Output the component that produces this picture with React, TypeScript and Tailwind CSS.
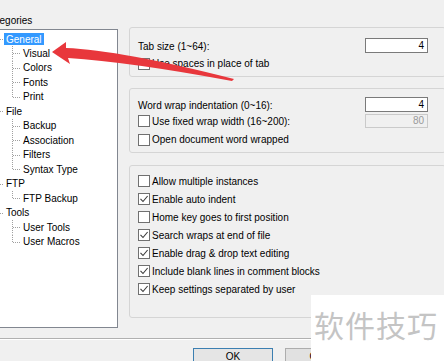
import React from 'react';

type Node = { label: string; level: 0 | 1; selected?: boolean; last?: boolean };

const tree: Node[] = [
  { label: 'General', level: 0, selected: true },
  { label: 'Visual', level: 1 },
  { label: 'Colors', level: 1 },
  { label: 'Fonts', level: 1 },
  { label: 'Print', level: 1, last: true },
  { label: 'File', level: 0 },
  { label: 'Backup', level: 1 },
  { label: 'Association', level: 1 },
  { label: 'Filters', level: 1 },
  { label: 'Syntax Type', level: 1, last: true },
  { label: 'FTP', level: 0 },
  { label: 'FTP Backup', level: 1, last: true },
  { label: 'Tools', level: 0 },
  { label: 'User Tools', level: 1 },
  { label: 'User Macros', level: 1, last: true },
];

const options = [
  { label: 'Allow multiple instances', checked: false },
  { label: 'Enable auto indent', checked: true },
  { label: 'Home key goes to first position', checked: false },
  { label: 'Search wraps at end of file', checked: true },
  { label: 'Enable drag & drop text editing', checked: true },
  { label: 'Include blank lines in comment blocks', checked: true },
  { label: 'Keep settings separated by user', checked: true },
];

const Checkbox = ({ checked }: { checked?: boolean }) => (
  <div className="w-[12px] h-[12px] border border-[#707070] bg-white flex-shrink-0 flex items-center justify-center">
    {checked && (
      <svg width="10" height="10" viewBox="0 0 10 10">
        <path d="M1.5 4.8 L4 7.5 L8.6 2" fill="none" stroke="#3a3a3a" strokeWidth="1.1" />
      </svg>
    )}
  </div>
);

const CheckRow = ({ label, checked, className = '' }: { label: string; checked?: boolean; className?: string }) => (
  <div className={`flex items-center ${className}`}>
    <Checkbox checked={checked} />
    <span className="ml-[2px] leading-[12px] pt-[1px]">{label}</span>
  </div>
);

const TreeRow = ({ node }: { node: Node }) => (
  <div className="flex h-[14.5px] items-center">
    {node.level === 0 ? (
      <svg width="4" height="14.5" className="flex-shrink-0">
        <line x1="0" y1="7.5" x2="4" y2="7.5" stroke="#a0a0a0" strokeDasharray="1 1" />
      </svg>
    ) : (
      <svg width="23" height="14.5" className="flex-shrink-0">
        <line x1="12.5" y1="0" x2="12.5" y2={node.last ? 7.5 : 14.5} stroke="#a0a0a0" strokeDasharray="1 1" />
        <line x1="13" y1="7.5" x2="20" y2="7.5" stroke="#a0a0a0" strokeDasharray="1 1" />
      </svg>
    )}
    {node.selected ? (
      <span className="bg-[#3399ff] text-white px-[2px] h-[12px] leading-[13px]">{node.label}</span>
    ) : (
      <span className={`${node.level === 0 ? 'pl-[2px]' : ''} leading-[12px] pt-[1px] whitespace-nowrap`}>{node.label}</span>
    )}
  </div>
);

export default function App() {
  return (
    <div className="relative w-[444px] h-[361px] overflow-hidden bg-[#f0f0f0] text-black text-[10px] font-['Liberation_Sans',Arial,sans-serif]">
      <div className="flex items-start h-[338px]">
        {/* Categories tree */}
        <div className="w-[118px] flex-shrink-0">
          <div className="h-[29px] pt-[15px] leading-[12px] ml-[-16px] whitespace-nowrap">Categories</div>
          <div className="-ml-[3px] w-[121px] h-[299px] border border-[#828790] bg-white pl-[2px] pt-[1.5px]">
            {tree.map((n) => (
              <TreeRow key={n.label} node={n} />
            ))}
          </div>
        </div>

        {/* Settings groups */}
        <div className="ml-[11px] pt-[27px] w-[317px] flex-shrink-0 flex flex-col">
          <div className="h-[50px] border border-[#d5d5d5] rounded-[3px] pt-[10px] pl-[8px] pr-[17px]">
            <div className="flex h-[15px] items-center justify-between">
              <span className="pt-[1px]">Tab size (1~64):</span>
              <div className="w-[63px] h-[15px] border border-[#7a7a7a] bg-white text-right pr-[3px] leading-[13px]">4</div>
            </div>
            <CheckRow label="Use spaces in place of tab" className="mt-[4px] h-[13px]" />
          </div>

          <div className="mt-[11px] h-[65px] border border-[#d5d5d5] rounded-[3px] pt-[8px] pl-[8px] pr-[17px]">
            <div className="flex h-[15px] items-center justify-between">
              <span className="pt-[1px]">Word wrap indentation (0~16):</span>
              <div className="w-[63px] h-[15px] border border-[#7a7a7a] bg-white text-right pr-[3px] leading-[13px]">4</div>
            </div>
            <div className="mt-[2px] flex h-[14px] items-center justify-between">
              <CheckRow label="Use fixed wrap width (16~200):" />
              <div className="w-[63px] h-[14px] border border-[#cacaca] bg-[#f0f0f0] text-[#9a9a9a] text-right pr-[3px] leading-[12px]">80</div>
            </div>
            <CheckRow label="Open document word wrapped" className="mt-[5px] h-[13px]" />
          </div>

          <div className="mt-[12px] h-[153px] border border-[#d5d5d5] rounded-[3px] pt-[6px] pl-[8px]">
            {options.map((o) => (
              <CheckRow key={o.label} label={o.label} checked={o.checked} className="h-[18px]" />
            ))}
          </div>
        </div>
      </div>

      {/* Separator */}
      <div className="h-[2px] border-t border-[#b0b0b0] border-b border-b-white" />

      {/* Buttons */}
      <div className="flex pl-[193px] pt-[8px] gap-[12px]">
        <div className="w-[80px] h-[23px] border border-[#3c7fb1] bg-[#e5e5e5] text-center pt-[3px] leading-[10px]">OK</div>
        <div className="w-[80px] h-[23px] border border-[#adadad] bg-[#e1e1e1] text-center pt-[3px] leading-[10px]">Cancel</div>
      </div>

      {/* Red annotation arrow */}
      <svg className="absolute left-0 top-0 pointer-events-none" width="444" height="361">
        <path
          d="M52 52 L66 42 L66 48 Q120 50 234 79 L232 81 Q130 62 68 58 L70 64 Z"
          fill="#e8373c"
        />
      </svg>

      {/* Watermark */}
      <div className="absolute left-[311px] top-[295px] right-0 bottom-0 bg-white">
        <div className="pl-[3px] pt-[14px] text-[30px] leading-[30px] tracking-[1px] text-[#c4c4c4] font-['Noto_Sans_CJK_SC',sans-serif] whitespace-nowrap">
          软件技巧
        </div>
      </div>
    </div>
  );
}
